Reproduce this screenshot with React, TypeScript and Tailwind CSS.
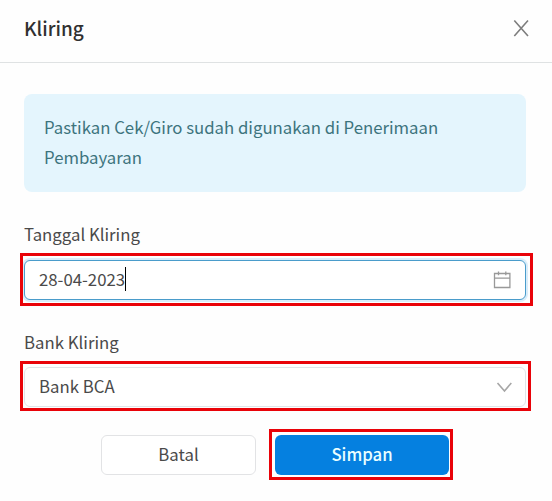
import { useState } from "react";

function CloseIcon() {
  return (
    <svg width="16" height="18" viewBox="0 0 16 18" fill="none" stroke="#7d7d7d" strokeWidth="1.6">
      <path d="M1.3 1.5l13.7 15.5M15 1.5L1.3 17" />
    </svg>
  );
}

function CalendarIcon() {
  return (
    <svg width="18" height="18" viewBox="0 0 18 18" fill="none" stroke="#999999" strokeWidth="1.3">
      <path d="M1.5 2.5h15.4v14H1.5zM1.5 7.2h15.4M5.5 0.4v3.8M12.8 0.4v3.8" />
    </svg>
  );
}

function ChevronIcon() {
  return (
    <svg width="16" height="11" viewBox="0 0 16 11" fill="none" stroke="#a6a6a6" strokeWidth="1.6">
      <path d="M1.5 1l7 8L15.3 1" />
    </svg>
  );
}

export default function App() {
  const [date, setDate] = useState("28-04-2023");

  return (
    <main className="h-[501px] w-[552px] overflow-hidden bg-[#fefefe] font-['Noto_Sans_CJK_SC',sans-serif] text-[16.78px] text-[#4a4a4a]">
      <header className="flex h-[63px] items-center justify-between border-b border-[#dfe2e3] pr-[23px] pb-1.5 pl-6">
        <h1 className="text-[19px] leading-6 font-medium text-[#303030]">Kliring</h1>
        <button aria-label="Tutup">
          <CloseIcon />
        </button>
      </header>

      <div className="pt-[31px] pr-[26px] pl-6">
        <div className="h-[98px] rounded-lg bg-[#e4f5fd] px-5 pt-[18px] leading-[30px] text-[#3d747d]">
          Pastikan Cek/Giro sudah digunakan di Penerimaan Pembayaran
        </div>

        <label className="mt-[30px] block leading-6">Tanggal Kliring</label>
        <div className="relative mt-3.5 flex h-10 items-center justify-between rounded-md border border-[#4a9ccb] bg-white pr-3.5 pl-3.5 shadow-[0_0_0_2px_#d9edfa]">
          <div className="flex items-center pb-0.5">
            <input
              value={date}
              onChange={(e) => setDate(e.target.value)}
              className="h-6 w-[86px] bg-transparent leading-6 outline-none"
            />
            <span className="h-6 w-px bg-black" />
          </div>
          <CalendarIcon />
          <span className="pointer-events-none absolute -top-2 -right-2 -bottom-[7px] -left-[5px] border-3 border-[#e90309]" />
        </div>

        <label className="mt-[30px] block leading-6">Bank Kliring</label>
        <div className="relative mt-[13px] flex h-10 items-center justify-between rounded-md border border-[#e0e4e8] bg-white pr-[13px] pl-3.5">
          <span className="pb-0.5 leading-6">Bank BCA</span>
          <ChevronIcon />
          <span className="pointer-events-none absolute -top-[7px] -right-1.5 -bottom-[5px] -left-[5px] border-3 border-[#e90309]" />
        </div>

        <div className="mt-7 flex gap-[19px] pl-[77px]">
          <button className="h-10 w-[155px] rounded-md border border-[#e2e3e5] bg-white pb-0.5 leading-6">Batal</button>
          <div className="relative">
            <button className="h-10 w-[174px] rounded-md bg-[#0580e0] pb-0.5 leading-6 font-medium text-[#eaffff]">Simpan</button>
            <span className="pointer-events-none absolute -top-1.5 -right-1 -bottom-[5px] -left-1.5 border-3 border-[#e90309]" />
          </div>
        </div>
      </div>
    </main>
  );
}
